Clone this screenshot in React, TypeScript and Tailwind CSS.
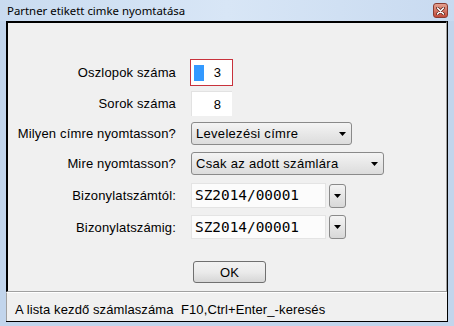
import React from "react";

const Arrow = () => (
  <svg width="7" height="4" viewBox="0 0 7 4" className="block">
    <path d="M0 0 H7 L3.5 4 Z" fill="#000" />
  </svg>
);

export default function App() {
  const label = "w-[168px] text-right text-[13px] text-black leading-none tracking-[0.15px]";
  return (
    <div className="w-[454px] h-[326px] bg-[#c2d5ec] relative overflow-hidden font-['Liberation_Sans',sans-serif]">
      <div className="h-[21px] flex items-center pl-[7px] bg-gradient-to-r from-[#c9dbf0] via-[#d8e6f6] to-[#c8daf0]">
        <span className="text-[11.4px] text-black font-['Noto_Sans',sans-serif] leading-none">Partner etikett cimke nyomtatása</span>
      </div>
      <div className="absolute left-[433px] top-[3px] w-[15px] h-[15px] rounded-[3px] border border-[#8a3b30] bg-gradient-to-b from-[#e3a090] to-[#c24a3a] flex items-center justify-center">
        <svg width="9" height="8" viewBox="0 0 9 8">
          <path d="M1.5 1 L7.5 7 M7.5 1 L1.5 7" stroke="#5a2018" strokeWidth="3" strokeLinecap="round" />
          <path d="M1.5 1 L7.5 7 M7.5 1 L1.5 7" stroke="#fff" strokeWidth="1.6" strokeLinecap="round" />
        </svg>
      </div>
      <div className="ml-[6px] w-[442px] h-[301px] bg-[#f0f0f0] flex flex-col border-r border-b border-black">
        <div className="flex-1 border-l-2 border-t-2 border-black border-r border-r-[#a0a0a0] border-b border-b-[#a0a0a0] flex flex-col pt-[36px]">
          <div className="flex items-center h-[27px]">
            <div className={label}>Oszlopok száma</div>
            <div className="ml-[14px] w-[43px] h-[27px] bg-white border border-[#c8323c] flex items-center justify-between pl-[3px] pr-[11px]">
              <div className="w-[10px] h-[16px] bg-[#3399ff]" />
              <span className="text-[13px] leading-none">3</span>
            </div>
          </div>
          <div className="flex items-center h-[25px] mt-[5px]">
            <div className={label}>Sorok száma</div>
            <div className="ml-[15px] w-[41px] h-[25px] bg-white border-t border-l border-[#e2e2e2] flex items-center justify-end pr-[11px]">
              <span className="text-[13px] leading-none">8</span>
            </div>
          </div>
          <div className="flex items-center h-[23px] mt-[6px]">
            <div className={label}>Milyen címre nyomtasson?</div>
            <div className="ml-[15px] w-[161px] h-[23px] rounded-[3px] border border-[#8a8a8a] bg-gradient-to-b from-[#f4f4f4] to-[#dcdcdc] flex items-center justify-between pl-[4px] pr-[5px]">
              <span className="text-[13px] leading-none tracking-[0.3px]">Levelezési címre</span>
              <Arrow />
            </div>
          </div>
          <div className="flex items-center h-[23px] mt-[7px]">
            <div className={label}>Mire nyomtasson?</div>
            <div className="ml-[15px] w-[193px] h-[23px] rounded-[3px] border border-[#8a8a8a] bg-gradient-to-b from-[#f4f4f4] to-[#dcdcdc] flex items-center justify-between pl-[4px] pr-[5px]">
              <span className="text-[13px] leading-none tracking-[0.3px]">Csak az adott számlára</span>
              <Arrow />
            </div>
          </div>
          <div className="flex items-center h-[25px] mt-[8px]">
            <div className={label}>Bizonylatszámtól:</div>
            <div className="ml-[15px] w-[135px] h-[25px] bg-[#fcfcfc] border border-[#e4e4e4] flex items-center pl-[3px]">
              <span className="text-[14.4px] leading-none font-['DejaVu_Sans_Mono',monospace]">SZ2014/00001</span>
            </div>
            <div className="ml-[3px] w-[17px] h-[24px] rounded-[3px] border border-[#8a8a8a] bg-gradient-to-b from-[#f4f4f4] to-[#d8d8d8] flex items-center justify-center">
              <Arrow />
            </div>
          </div>
          <div className="flex items-center h-[24px] mt-[7px]">
            <div className={label}>Bizonylatszámig:</div>
            <div className="ml-[15px] w-[135px] h-[24px] bg-[#fcfcfc] border border-[#e4e4e4] flex items-center pl-[3px]">
              <span className="text-[14.4px] leading-none font-['DejaVu_Sans_Mono',monospace]">SZ2014/00001</span>
            </div>
            <div className="ml-[3px] w-[17px] h-[24px] rounded-[3px] border border-[#8a8a8a] bg-gradient-to-b from-[#f4f4f4] to-[#d8d8d8] flex items-center justify-center">
              <Arrow />
            </div>
          </div>
          <div className="flex mt-[22px] pl-[185px]">
            <div className="w-[73px] h-[22px] rounded-[3px] border border-[#707070] bg-gradient-to-b from-[#f2f2f2] via-[#ebebeb] to-[#d6d6d6] flex items-center justify-center">
              <span className="text-[13px] leading-none">OK</span>
            </div>
          </div>
        </div>
        <div className="h-[29px] border-l border-[#a0a0a0] border-t border-t-white flex items-center pl-[8px] pt-[4px]">
          <span className="text-[13px] leading-none whitespace-pre tracking-[0.1px]">A lista kezdő számlaszáma  F10,Ctrl+Enter_-keresés</span>
        </div>
      </div>
    </div>
  );
}
